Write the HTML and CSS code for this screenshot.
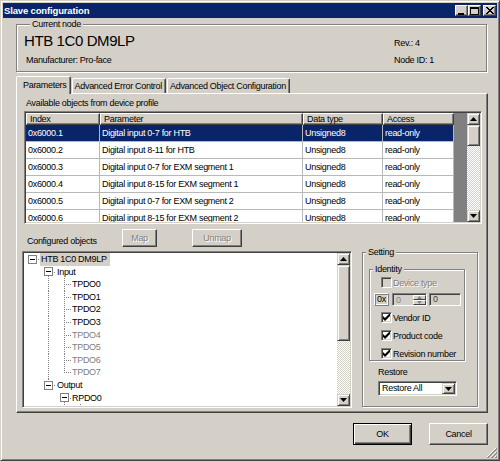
FILE: index.html
```html
<!DOCTYPE html>
<html lang="en">
<head>
    <meta charset="UTF-8">
    <meta name="viewport" content="width=device-width, initial-scale=1.0">
    <title>Slave configuration</title>
    <link rel="stylesheet" href="styles.css">
</head>
<body>
    <div class="window">
        <div class="titlebar">
            <span class="title">Slave configuration</span>
            <div class="caption-buttons">
                <span class="cap-btn"><svg width="7" height="8" viewBox="0 0 7 8"><rect x="0" y="6" width="6" height="2" fill="#000"/></svg></span>
                <span class="cap-btn"><svg width="9" height="8" viewBox="0 0 9 8"><path d="M0.5 0.5h8v7h-8z" stroke="#000" fill="none"/><rect x="0" y="0" width="9" height="2" fill="#000"/></svg></span>
                <span class="cap-btn close"><svg width="8" height="7" viewBox="0 0 8 7" shape-rendering="crispEdges"><path d="M0 0h2v1h-2zM6 0h2v1h-2zM1 1h2v1h-2zM5 1h2v1h-2zM2 2h4v1h-4zM3 3h2v1h-2zM2 4h4v1h-4zM1 5h2v1h-2zM5 5h2v1h-2zM0 6h2v1h-2zM6 6h2v1h-2z" fill="#000"/></svg></span>
            </div>
        </div>

        <div class="client">
            <!-- Current node -->
            <div class="group node-group">
                <div class="group-title">Current node</div>
                <div class="node-info">
                    <div class="node-name">HTB 1C0 DM9LP</div>
                    <div>Rev.: 4</div>
                    <div class="node-maker">Manufacturer: Pro-face</div>
                    <div>Node ID: 1</div>
                </div>
            </div>

            <div class="tabs">
                <div class="tab active">Parameters</div>
                <div class="tab">Advanced Error Control</div>
                <div class="tab">Advanced Object Configuration</div>
            </div>

            <div class="tab-panel">
                <div class="caption">Available objects from device profile</div>

                <div class="listview sunken">
                    <div class="list-main">
                        <div class="list-head">
                            <div class="hcell">Index</div>
                            <div class="hcell">Parameter</div>
                            <div class="hcell">Data type</div>
                            <div class="hcell">Access</div>
                        </div>
                        <div class="list-row selected">
                            <div>0x6000.1</div><div>Digital input 0-7 for HTB</div><div>Unsigned8</div><div>read-only</div>
                        </div>
                        <div class="list-row">
                            <div>0x6000.2</div><div>Digital input 8-11 for HTB</div><div>Unsigned8</div><div>read-only</div>
                        </div>
                        <div class="list-row">
                            <div>0x6000.3</div><div>Digital input 0-7 for EXM segment 1</div><div>Unsigned8</div><div>read-only</div>
                        </div>
                        <div class="list-row">
                            <div>0x6000.4</div><div>Digital input 8-15 for EXM segment 1</div><div>Unsigned8</div><div>read-only</div>
                        </div>
                        <div class="list-row">
                            <div>0x6000.5</div><div>Digital input 0-7 for EXM segment 2</div><div>Unsigned8</div><div>read-only</div>
                        </div>
                        <div class="list-row">
                            <div>0x6000.6</div><div>Digital input 8-15 for EXM segment 2</div><div>Unsigned8</div><div>read-only</div>
                        </div>
                    </div>
                    <div class="list-fill"></div>
                    <div class="scrollbar">
                        <span class="sb-btn"><svg width="7" height="4" viewBox="0 0 7 4"><path d="M3.5 0L7 4H0z" fill="#000"/></svg></span>
                        <span class="sb-thumb list-thumb"></span>
                        <span class="sb-track"></span>
                        <span class="sb-btn"><svg width="7" height="4" viewBox="0 0 7 4"><path d="M0 0h7L3.5 4z" fill="#000"/></svg></span>
                    </div>
                </div>

                <div class="lower">
                    <div class="config">
                        <div class="config-bar">
                            <span class="config-label">Configured objects</span>
                            <button class="btn map-btn" disabled>Map</button>
                            <button class="btn unmap-btn" disabled>Unmap</button>
                        </div>

                        <div class="tree sunken">
                            <div class="tree-list">
                                <div class="node"><span class="cell box"><i class="exp"></i></span><span class="label root-label">HTB 1C0 DM9LP</span></div>
                                <div class="node"><span class="cell"></span><span class="cell box down"><i class="exp"></i></span><span class="label">Input</span></div>
                                <div class="node"><span class="cell"></span><span class="cell v"></span><span class="cell branch"></span><span class="label leaf">TPDO0</span></div>
                                <div class="node"><span class="cell"></span><span class="cell v"></span><span class="cell branch"></span><span class="label leaf">TPDO1</span></div>
                                <div class="node"><span class="cell"></span><span class="cell v"></span><span class="cell branch"></span><span class="label leaf">TPDO2</span></div>
                                <div class="node"><span class="cell"></span><span class="cell v"></span><span class="cell branch"></span><span class="label leaf">TPDO3</span></div>
                                <div class="node"><span class="cell"></span><span class="cell v"></span><span class="cell branch"></span><span class="label leaf off">TPDO4</span></div>
                                <div class="node"><span class="cell"></span><span class="cell v"></span><span class="cell branch"></span><span class="label leaf off">TPDO5</span></div>
                                <div class="node"><span class="cell"></span><span class="cell v"></span><span class="cell branch"></span><span class="label leaf off">TPDO6</span></div>
                                <div class="node"><span class="cell"></span><span class="cell v"></span><span class="cell last"></span><span class="label leaf off">TPDO7</span></div>
                                <div class="node"><span class="cell"></span><span class="cell box up"><i class="exp"></i></span><span class="label">Output</span></div>
                                <div class="node"><span class="cell"></span><span class="cell"></span><span class="cell box down"><i class="exp"></i></span><span class="label leaf">RPDO0</span></div>
                                <div class="node"><span class="cell"></span><span class="cell"></span><span class="cell v"></span><span class="cell v"></span></div>
                            </div>
                            <div class="scrollbar">
                                <span class="sb-btn"><svg width="7" height="4" viewBox="0 0 7 4"><path d="M3.5 0L7 4H0z" fill="#000"/></svg></span>
                                <span class="sb-thumb tree-thumb"></span>
                                <span class="sb-track"></span>
                                <span class="sb-btn"><svg width="7" height="4" viewBox="0 0 7 4"><path d="M0 0h7L3.5 4z" fill="#000"/></svg></span>
                            </div>
                        </div>
                    </div>

                    <div class="group setting-group">
                        <div class="group-title">Setting</div>
                        <div class="group identity-group">
                            <div class="group-title">Identity</div>
                            <label class="check-row disabled"><span class="checkbox"></span>Device type</label>
                            <div class="hex-row">
                                <span class="hex-prefix">0x</span>
                                <span class="spin-edit">
                                    <span class="spin-value">0</span>
                                    <span class="spin-btns">
                                        <span class="spin-btn"><svg width="5" height="3" viewBox="0 0 5 3"><path d="M2.5 0L5 3H0z" fill="#808080"/></svg></span>
                                        <span class="spin-btn"><svg width="5" height="3" viewBox="0 0 5 3"><path d="M0 0h5L2.5 3z" fill="#808080"/></svg></span>
                                    </span>
                                </span>
                                <span class="hex-edit">0</span>
                            </div>
                            <label class="check-row"><span class="checkbox checked"><svg width="7" height="7" viewBox="0 0 7 7"><path d="M0 2v3l2 2 5-5v-3l-5 5z" fill="#000"/></svg></span>Vendor ID</label>
                            <label class="check-row"><span class="checkbox checked"><svg width="7" height="7" viewBox="0 0 7 7"><path d="M0 2v3l2 2 5-5v-3l-5 5z" fill="#000"/></svg></span>Product code</label>
                            <label class="check-row"><span class="checkbox checked"><svg width="7" height="7" viewBox="0 0 7 7"><path d="M0 2v3l2 2 5-5v-3l-5 5z" fill="#000"/></svg></span>Revision number</label>
                        </div>
                        <div class="restore-label">Restore</div>
                        <div class="combo">
                            <span class="combo-value">Restore All</span>
                            <span class="sb-btn combo-btn"><svg width="7" height="4" viewBox="0 0 7 4"><path d="M0 0h7L3.5 4z" fill="#000"/></svg></span>
                        </div>
                    </div>
                </div>
            </div>

            <div class="dialog-buttons">
                <button class="btn default-btn">OK</button>
                <button class="btn">Cancel</button>
            </div>
        </div>

        <span class="grip"><svg width="11" height="11" viewBox="0 0 11 11"><path d="M10 1L1 10M10 5L5 10M10 9L9 10" stroke="#fff"/><path d="M11 1L1 11M11 2L2 11M11 5L5 11M11 6L6 11M11 9L9 11M11 10L10 11" stroke="#808080" stroke-width="0.8"/></svg></span>
    </div>
</body>
</html>
```

FILE: styles.css
```css
* {
    box-sizing: border-box;
}

body {
    margin: 0;
    background: #d4d0c8;
    font-family: "Liberation Sans", Arial, sans-serif;
    font-size: 9px;
    letter-spacing: -0.3px;
    color: #000;
}

/* window frame */
.window {
    position: relative;
    width: 500px;
    height: 461px;
    padding: 2px;
    border: 1px solid;
    border-color: #d4d0c8 #404040 #404040 #d4d0c8;
    box-shadow: inset 1px 1px 0 #fff, inset -1px -1px 0 #808080;
    background: #d4d0c8;
    display: flex;
    flex-direction: column;
}

.titlebar {
    height: 15px;
    flex: none;
    display: flex;
    align-items: center;
    justify-content: space-between;
    padding: 0 1px 0 1px;
    background: #0a246a;
    color: #fff;
}

.title {
    font-weight: bold;
    font-size: 9.5px;
    letter-spacing: -0.15px;
}

.caption-buttons {
    display: flex;
    gap: 0;
}

.cap-btn {
    width: 13px;
    height: 11px;
    display: flex;
    align-items: center;
    justify-content: center;
    background: #d4d0c8;
    border: 1px solid;
    border-color: #fff #404040 #404040 #fff;
    box-shadow: inset -1px -1px 0 #808080;
}

.cap-btn.close {
    margin-left: 2px;
}

.client {
    flex: 1;
    display: flex;
    flex-direction: column;
    padding: 0 9px 0 13px;
}

/* etched group box */
.group {
    border: 1px solid #808080;
    box-shadow: inset 1px 1px 0 #fff, 1px 1px 0 #fff;
}

.group-title {
    width: max-content;
    margin: -6px 0 0 6px;
    padding: 0 2px;
    line-height: 11px;
    background: #d4d0c8;
}

.node-group {
    margin: 6px 1px 0 0;
    padding: 0 0 5px 7px;
}

.node-info {
    display: grid;
    grid-template-columns: 1fr 92px;
    align-items: baseline;
    row-gap: 5px;
    padding-top: 2px;
}

.node-name {
    font-size: 15px;
    line-height: 17px;
    letter-spacing: -0.4px;
}

.node-info div {
    line-height: 12px;
}

.node-info .node-name {
    line-height: 17px;
}

.node-maker {
    padding-left: 2px;
}

/* tabs */
.tabs {
    display: flex;
    align-items: flex-start;
    height: 18px;
    margin-top: 4px;
}

.tab {
    height: 15px;
    margin-top: 2px;
    padding: 0 3px 0 2px;
    line-height: 14px;
    background: #d4d0c8;
    border: 1px solid;
    border-bottom: none;
    border-color: #fff #404040 transparent #fff;
    box-shadow: inset -1px 0 0 #808080;
    border-radius: 2px 2px 0 0;
    margin-left: 1px;
}

.tab.active {
    position: relative;
    z-index: 1;
    height: 18px;
    margin: 0;
    padding: 1px 3px 0 6px;
}

.tab-panel {
    height: 320px;
    margin-top: -1px;
    padding: 3px 5px 0 7px;
    border: 1px solid;
    border-color: #fff #404040 #404040 #fff;
    box-shadow: inset -1px -1px 0 #808080;
}

.caption {
    padding-left: 2px;
    line-height: 12px;
}

.sunken {
    border: 1px solid;
    border-color: #808080 #fff #fff #808080;
    box-shadow: inset 1px 1px 0 #404040, inset -1px -1px 0 #d4d0c8;
    padding: 1px;
}

/* list view */
.listview {
    display: flex;
    height: 113px;
    margin-top: 2px;
}

.list-main {
    width: 428px;
    background: #fff;
    overflow: hidden;
}

.list-head,
.list-row {
    display: grid;
    grid-template-columns: 74px 203px 80px 71px;
}

.hcell {
    height: 12px;
    line-height: 10px;
    padding-left: 3px;
    background: #d4d0c8;
    border: 1px solid;
    border-color: #fff #404040 #404040 #fff;
    box-shadow: inset -1px -1px 0 #808080;
}

.list-row div {
    height: 17px;
    line-height: 16px;
    padding-left: 2px;
    border-right: 1px solid #b8b8b8;
    border-bottom: 1px solid #b8b8b8;
    white-space: nowrap;
}

.list-row.selected {
    background: #0a246a;
    color: #fff;
}

.list-fill {
    flex: 1;
    background: #808080;
}

/* scroll bars */
.scrollbar {
    width: 13px;
    display: flex;
    flex-direction: column;
}

.sb-btn {
    height: 12px;
    flex: none;
    display: flex;
    align-items: center;
    justify-content: center;
    background: #d4d0c8;
    border: 1px solid;
    border-color: #d4d0c8 #404040 #404040 #d4d0c8;
    box-shadow: inset 1px 1px 0 #fff, inset -1px -1px 0 #808080;
}

.sb-thumb {
    flex: none;
    background: #d4d0c8;
    border: 1px solid;
    border-color: #d4d0c8 #404040 #404040 #d4d0c8;
    box-shadow: inset 1px 1px 0 #fff, inset -1px -1px 0 #808080;
}

.list-thumb {
    height: 21px;
}

.tree-thumb {
    height: 76px;
}

.sb-track {
    flex: 1;
    background: repeating-conic-gradient(#fff 0 25%, #d4d0c8 0 50%) 0 0 / 2px 2px;
}

/* lower half */
.lower {
    display: flex;
    align-items: flex-start;
    margin-top: 5px;
}

.config {
    width: 328px;
}

.config-bar {
    display: flex;
    height: 18px;
}

.config-label {
    width: 98px;
    align-self: flex-end;
    padding-left: 3px;
    line-height: 12px;
}

.btn {
    font: inherit;
    letter-spacing: inherit;
    color: #000;
    padding: 0;
    background: #d4d0c8;
    border: 1px solid;
    border-color: #fff #404040 #404040 #fff;
    box-shadow: inset -1px -1px 0 #808080;
}

.btn:disabled {
    color: #808080;
    text-shadow: 1px 1px 0 #fff;
}

.map-btn {
    width: 35px;
}

.unmap-btn {
    width: 50px;
    margin-left: 35px;
}

.tree {
    display: flex;
    height: 157px;
    margin: 4px 0 0 -2px;
}

.tree-list {
    flex: 1;
    background: #fff;
    overflow: hidden;
}

.node {
    display: flex;
    height: 12.6px;
    line-height: 12.6px;
}

.cell {
    width: 16px;
    flex: none;
    display: flex;
    align-items: center;
    justify-content: center;
    background-repeat: no-repeat;
}

.cell.v {
    background-image: repeating-linear-gradient(to bottom, #808080 0 1px, transparent 1px 2px);
    background-size: 1px 100%;
    background-position: 8px 0;
}

.cell.branch {
    background-image:
        repeating-linear-gradient(to bottom, #808080 0 1px, transparent 1px 2px),
        repeating-linear-gradient(to right, #808080 0 1px, transparent 1px 2px);
    background-size: 1px 100%, 8px 1px;
    background-position: 8px 0, 8px 6px;
}

.cell.last {
    background-image:
        repeating-linear-gradient(to bottom, #808080 0 1px, transparent 1px 2px),
        repeating-linear-gradient(to right, #808080 0 1px, transparent 1px 2px);
    background-size: 1px 7px, 8px 1px;
    background-position: 8px 0, 8px 6px;
}

.cell.box {
    background-image: repeating-linear-gradient(to right, #808080 0 1px, transparent 1px 2px);
    background-size: 4px 1px;
    background-position: 12px 6px;
}

.cell.box.down {
    background-image:
        repeating-linear-gradient(to right, #808080 0 1px, transparent 1px 2px),
        repeating-linear-gradient(to bottom, #808080 0 1px, transparent 1px 2px);
    background-size: 4px 1px, 1px 4px;
    background-position: 12px 6px, 8px 10px;
}

.cell.box.up {
    background-image:
        repeating-linear-gradient(to right, #808080 0 1px, transparent 1px 2px),
        repeating-linear-gradient(to bottom, #808080 0 1px, transparent 1px 2px);
    background-size: 4px 1px, 1px 3px;
    background-position: 12px 6px, 8px 0;
}

.exp {
    width: 9px;
    height: 9px;
    border: 1px solid #808080;
    background: #fff linear-gradient(#000, #000) no-repeat center / 5px 1px;
}

.label {
    padding: 0 2px 0 1px;
    white-space: nowrap;
}

.label.leaf {
    padding-left: 0;
}

.root-label {
    background: #d4d0c8;
    padding: 0 3px 0 1px;
}

.label.off {
    color: #808080;
}

/* setting panel */
.setting-group {
    width: 116px;
    height: 155px;
    margin: 23px 0 0 10px;
    padding: 0 12px 0 6px;
}

.setting-group > .group-title {
    margin-left: -3px;
}

.identity-group {
    margin-top: 11px;
    height: 92px;
    padding: 0 0 0 4px;
}

.identity-group > .group-title {
    margin-left: -1px;
}

.check-row {
    display: flex;
    align-items: center;
    height: 13px;
    padding-left: 7px;
    margin-top: 5px;
}

.identity-group > .check-row:first-of-type {
    margin-top: 1px;
}

.check-row.disabled {
    color: #808080;
    text-shadow: 1px 1px 0 #fff;
}

.checkbox {
    width: 11px;
    height: 11px;
    margin-right: 1px;
    display: flex;
    align-items: center;
    justify-content: center;
    background: #fff;
    border: 1px solid;
    border-color: #808080 #fff #fff #808080;
    box-shadow: inset 1px 1px 0 #404040, inset -1px -1px 0 #d4d0c8;
}

.check-row.disabled .checkbox {
    background: #d4d0c8;
}

.hex-row {
    display: flex;
    height: 13px;
    margin-top: 4px;
}

.hex-prefix {
    width: 15px;
    line-height: 11px;
    padding-left: 2px;
    border: 1px solid;
    border-color: #fff #808080 #808080 #fff;
    box-shadow: inset 1px 1px 0 #808080, inset -1px -1px 0 #fff;
}

.spin-edit {
    display: flex;
    width: 35px;
    margin-left: 3px;
    border: 1px solid;
    border-color: #808080 #fff #fff #808080;
    box-shadow: inset 1px 1px 0 #404040;
    padding: 1px 0 0 1px;
}

.spin-value {
    flex: 1;
    color: #808080;
    line-height: 10px;
    padding-left: 2px;
}

.spin-btns {
    width: 13px;
    display: flex;
    flex-direction: column;
}

.spin-btn {
    flex: 1;
    display: flex;
    align-items: center;
    justify-content: center;
    background: #d4d0c8;
    border: 1px solid;
    border-color: #fff #404040 #404040 #fff;
}

.hex-edit {
    width: 32px;
    margin-left: 2px;
    line-height: 11px;
    padding-left: 3px;
    color: #404040;
    border: 1px solid;
    border-color: #808080 #fff #fff #808080;
    box-shadow: inset 1px 1px 0 #404040;
}

.restore-label {
    margin-top: 5px;
    padding-left: 9px;
    line-height: 12px;
}

.combo {
    display: flex;
    width: 79px;
    height: 15px;
    margin: 3px 0 0 9px;
    padding: 1px;
    background: #fff;
    border: 1px solid;
    border-color: #808080 #fff #fff #808080;
    box-shadow: inset 1px 1px 0 #404040, inset -1px -1px 0 #d4d0c8;
}

.combo-value {
    flex: 1;
    line-height: 11px;
    padding-left: 2px;
}

.combo-btn {
    width: 13px;
    height: 11px;
}

/* dialog buttons */
.dialog-buttons {
    display: flex;
    justify-content: flex-end;
    gap: 17px;
    margin-top: 10px;
}

.dialog-buttons .btn {
    width: 59px;
    height: 22px;
}

.default-btn {
    border: 1px solid #000;
    box-shadow: inset 1px 1px 0 #fff, inset -1px -1px 0 #404040, inset -2px -2px 0 #808080;
}

.grip {
    position: absolute;
    right: 2px;
    bottom: 2px;
    width: 11px;
    height: 11px;
}
```
